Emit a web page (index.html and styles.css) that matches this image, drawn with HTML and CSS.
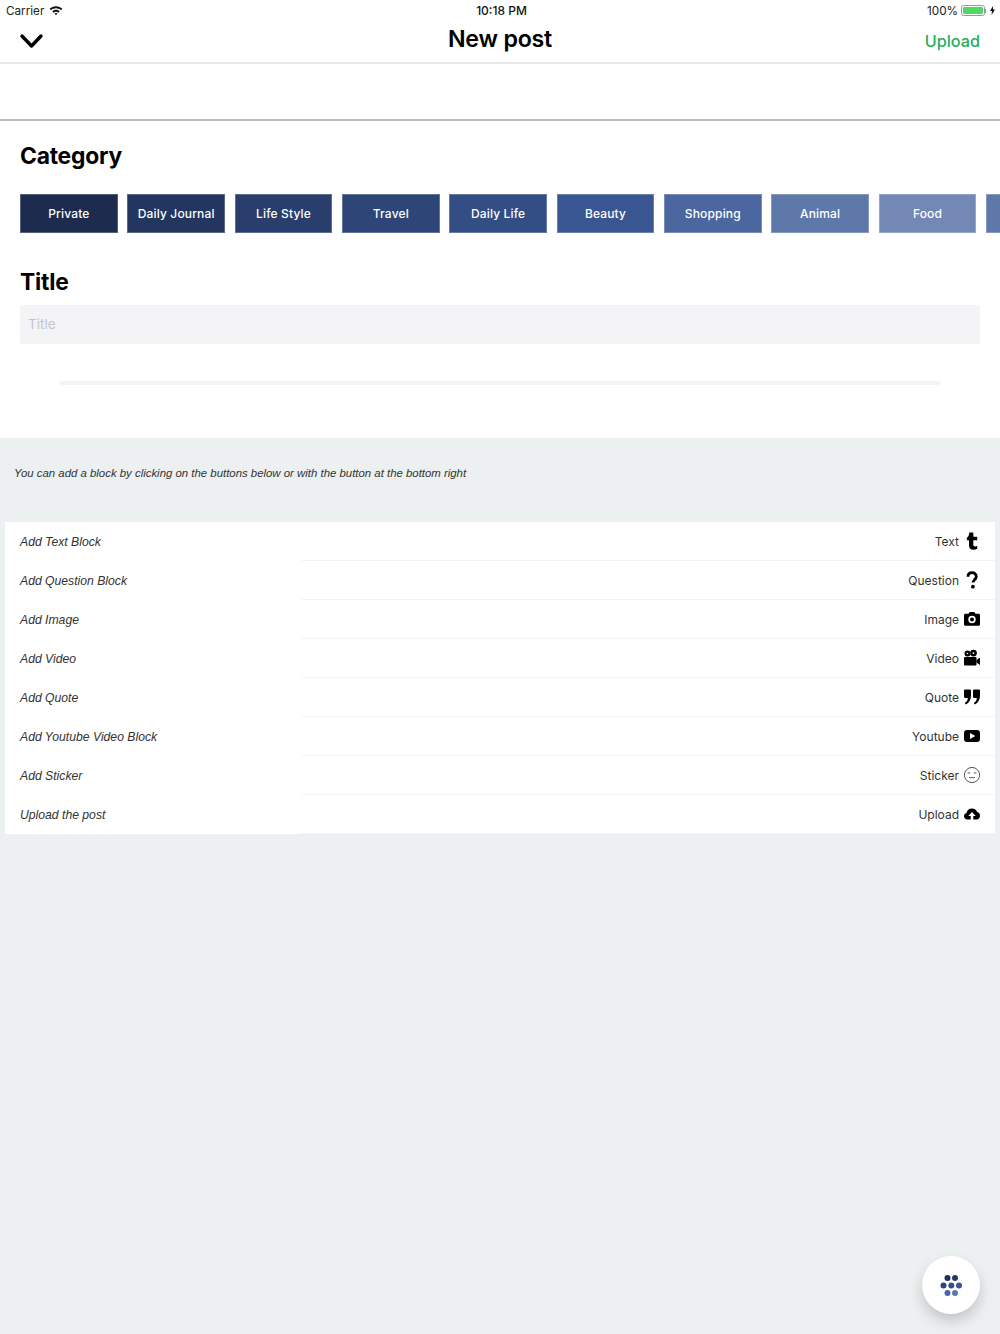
FILE: index.html
```html
<!DOCTYPE html>
<html lang="en">
<head>
<meta charset="utf-8">
<title>New post</title>
<link rel="stylesheet" href="styles.css">
</head>
<body>
<div class="page">
  <div class="status">
    <div class="status-left">
      <span>Carrier</span>
      <svg class="wifi" width="14" height="10" viewBox="0 0 15 11"><path d="M7.5 0.4C4.8 0.4 2.4 1.4 0.5 3.1L2 4.7C3.5 3.4 5.4 2.6 7.5 2.6S11.500 3.400 13 4.700L14.500 3.100C12.600 1.400 10.200 0.400 7.500 0.400ZM7.500 4.100C6 4.100 4.500 4.700 3.400 5.700L4.900 7.300C5.600 6.700 6.500 6.300 7.500 6.300S9.400 6.700 10.100 7.300L11.600 5.700C10.500 4.700 9 4.100 7.500 4.100ZM7.500 7.700C6.900 7.700 6.300 7.900 5.900 8.300L7.500 10.200L9.100 8.300C8.700 7.900 8.100 7.700 7.500 7.700Z" fill="#111"/></svg>
    </div>
    <div class="status-time">10:18 PM</div>
    <div class="status-right">
      <span>100%</span>
      <span class="battery"><span class="battery-fill"></span></span>
      <span class="battery-tip"></span>
      <svg width="5" height="9" viewBox="0 0 5 9"><path d="M3 0L0 5H2L1.500 9L5 3.500H3Z" fill="#111"/></svg>
    </div>
  </div>
  <header class="nav">
    <svg class="chevron" width="26" height="16" viewBox="0 0 26 16"><path d="M3 3L12.500 13L22 3" fill="none" stroke="#000" stroke-width="3.400" stroke-linecap="round" stroke-linejoin="round"/></svg>
    <h1 class="nav-title">New post</h1>
    <span class="nav-action">Upload</span>
  </header>
  <div class="blank"></div>
  <section class="form">
    <h2 class="heading heading-category">Category</h2>
    <div class="chips">
      <span class="chip c1">Private</span>
      <span class="chip c2">Daily Journal</span>
      <span class="chip c3">Life Style</span>
      <span class="chip c4">Travel</span>
      <span class="chip c5">Daily Life</span>
      <span class="chip c6">Beauty</span>
      <span class="chip c7">Shopping</span>
      <span class="chip c8">Animal</span>
      <span class="chip c9">Food</span>
      <span class="chip c10"></span>
    </div>
    <h2 class="heading heading-title">Title</h2>
    <div class="input">Title</div>
    <div class="rule"></div>
  </section>
  <section class="tray">
    <p class="hint">You can add a block by clicking on the buttons below or with the button at the bottom right</p>
    <div class="list">
      <div class="row">
        <span class="row-label">Add Text Block</span>
        <span class="row-action">Text
          <svg class="icon" width="18" height="18" viewBox="0 0 18 18"><path d="M6.300 0.500H10.300V4.800H14.200V8.200H10.300V12.500C10.300 13.900 11 14.400 12.100 14.400C12.900 14.400 13.500 14.200 14.200 13.800V16.800C13.200 17.500 12 17.800 10.600 17.800C7.700 17.800 6 16.300 6 13.500V8.200H3.800V5.600C5.300 5 6.100 3.200 6.300 0.500Z" fill="#000"/></svg>
        </span>
      </div>
      <div class="row">
        <span class="row-label">Add Question Block</span>
        <span class="row-action">Question
          <svg class="icon" width="18" height="18" viewBox="0 0 18 18"><path d="M5 5.800C5 3 6.800 1.700 9 1.700C11.400 1.700 13.300 3.300 13.300 5.600C13.300 8.500 10 8.800 10 11.500" fill="none" stroke="#000" stroke-width="2.800"/><circle cx="9.900" cy="15.700" r="1.900" fill="#000"/></svg>
        </span>
      </div>
      <div class="row">
        <span class="row-label">Add Image</span>
        <span class="row-action">Image
          <svg class="icon" width="18" height="18" viewBox="0 0 18 18"><path fill-rule="evenodd" d="M2.500 3.800H5.500L6.700 2H11.300L12.500 3.800H15.500C16.400 3.800 17 4.400 17 5.300V14.200C17 15.100 16.400 15.700 15.500 15.700H2.500C1.600 15.700 1 15.100 1 14.200V5.300C1 4.400 1.600 3.800 2.500 3.800ZM9 5.800A3.700 3.700 0 1 0 9 13.200A3.700 3.700 0 1 0 9 5.800ZM9 7.500A2 2 0 1 1 9 11.500A2 2 0 1 1 9 7.500Z" fill="#000"/></svg>
        </span>
      </div>
      <div class="row">
        <span class="row-label">Add Video</span>
        <span class="row-action">Video
          <svg class="icon" width="18" height="18" viewBox="0 0 18 18"><path fill-rule="evenodd" d="M4.500 1.500A3 3 0 1 0 4.500 7.500A3 3 0 1 0 4.500 1.500ZM4.500 3.700A0.800 0.800 0 1 1 4.500 5.300A0.800 0.800 0 1 1 4.500 3.700ZM10.500 0.700A3.400 3.400 0 1 0 10.500 7.500A3.400 3.400 0 1 0 10.500 0.700ZM10.500 3.200A0.900 0.900 0 1 1 10.500 5A0.900 0.900 0 1 1 10.500 3.200Z" fill="#000"/><rect x="1" y="8" width="12.500" height="8.500" rx="1" fill="#000"/><path d="M13.500 11L17 8.800V16L13.500 13.500Z" fill="#000"/></svg>
        </span>
      </div>
      <div class="row">
        <span class="row-label">Add Quote</span>
        <span class="row-action">Quote
          <svg class="icon" width="18" height="18" viewBox="0 0 18 18"><path d="M2.200 1.500H6.800C7.500 1.500 8 2 8 2.700V7.500C8 11.500 6.400 14.800 2.700 16.500L1.800 14.900C3.700 13.900 4.700 12.400 4.800 10H2.200C1.500 10 1 9.500 1 8.800V2.700C1 2 1.500 1.500 2.200 1.500ZM11.200 1.500H15.800C16.500 1.500 17 2 17 2.700V7.500C17 11.500 15.400 14.800 11.700 16.500L10.800 14.900C12.700 13.900 13.700 12.400 13.800 10H11.200C10.500 10 10 9.500 10 8.800V2.700C10 2 10.500 1.500 11.200 1.500Z" fill="#000"/></svg>
        </span>
      </div>
      <div class="row">
        <span class="row-label">Add Youtube Video Block</span>
        <span class="row-action">Youtube
          <svg class="icon" width="18" height="18" viewBox="0 0 18 18"><path fill-rule="evenodd" d="M4 3H14C16 3 17 4 17 6V12C17 14 16 15 14 15H4C2 15 1 14 1 12V6C1 4 2 3 4 3ZM7 6V12L12.300 9Z" fill="#000"/></svg>
        </span>
      </div>
      <div class="row">
        <span class="row-label">Add Sticker</span>
        <span class="row-action">Sticker
          <svg class="icon" width="18" height="18" viewBox="0 0 18 18" fill="none" stroke="#444" stroke-width="0.900"><circle cx="9" cy="9" r="7.600"/><path d="M4.800 7.300Q6 6.100 7.200 7.300M10.800 7.300Q12 6.100 13.200 7.300M6 11.300Q7.500 12.300 9 11.300Q10.500 12.300 12 11.300"/></svg>
        </span>
      </div>
      <div class="row">
        <span class="row-label">Upload the post</span>
        <span class="row-action">Upload
          <svg class="icon" width="18" height="18" viewBox="0 0 18 18"><path fill-rule="evenodd" d="M4.500 14.500C2.500 14.500 1 13 1 11.200C1 9.600 2 8.300 3.500 8C3.800 5.500 6 3.500 9 3.500C11.500 3.500 13.500 5 14.200 7.100C15.900 7.400 17 8.900 17 10.700C17 12.800 15.500 14.500 13.500 14.500H10.300V11H12.700L9 7L5.300 11H7.700V14.500Z" fill="#000"/></svg>
        </span>
      </div>
    </div>
  </section>
  <button class="fab" type="button" aria-label="Add block">
    <svg width="24" height="24" viewBox="0 0 24 24">
      <circle cx="8.500" cy="5" r="3" fill="#1f2f55"/><circle cx="16" cy="5" r="3" fill="#24386a"/>
      <circle cx="4.500" cy="12.500" r="3" fill="#2d4477"/><circle cx="12.300" cy="12.500" r="3" fill="#34508a"/><circle cx="20" cy="12.500" r="3" fill="#3a5699"/>
      <circle cx="8.500" cy="20" r="3" fill="#4a66a0"/><circle cx="16" cy="20" r="3" fill="#5f79ab"/>
    </svg>
  </button>
</div>
</body>
</html>
```
FILE: styles.css
```css
* { box-sizing: border-box; }
html, body { margin: 0; padding: 0; }
body { font-family: Inter, "Liberation Sans", sans-serif; background: #fff; color: #000; }
.page { position: relative; width: 1000px; height: 1334px; overflow: hidden; display: flex; flex-direction: column; }

.status { height: 20px; display: flex; align-items: center; justify-content: space-between; padding: 1px 5px 0 6px; font-size: 11.700px; color: #222; flex: none; position: relative; }
.status-left { display: flex; align-items: center; gap: 5px; width: 200px; }
.status-time { font-size: 12px; font-weight: 500; color: #111; padding-left: 2px; }
.status-right { display: flex; align-items: center; width: 200px; justify-content: flex-end; }
.battery { width: 24px; height: 11px; border: 1px solid #999; border-radius: 2.500px; padding: 1px; margin-left: 3px; display: flex; }
.battery-fill { flex: 1; background: #4cd964; border-radius: 1px; }
.battery-tip { width: 1px; height: 4px; background: #999; margin-right: 4px; }

.nav { height: 44px; flex: none; display: flex; align-items: center; justify-content: space-between; padding: 0 20px 0 19px; border-bottom: 2px solid #e8e8e8; position: relative; }
.chevron { display: block; }
.nav-title { position: absolute; left: 0; right: 0; top: 4px; margin: 0; text-align: center; font-size: 23.200px; line-height: 30px; font-weight: 600; letter-spacing: -0.200px; }
.nav-action { font-size: 16.200px; font-weight: 500; color: #27ae60; }

.blank { height: 57px; flex: none; border-bottom: 2px solid #bdbdbd; }

.form { height: 317px; flex: none; padding: 0 0 0 20px; overflow: hidden; }
.heading { margin: 0; font-size: 22.800px; line-height: 30px; font-weight: 700; letter-spacing: -0.200px; }
.heading-category { margin-top: 20px; }
.chips { display: flex; gap: 9.650px; margin-top: 23px; width: 1100px; }
.chip { flex: none; width: 97.700px; height: 39px; display: flex; align-items: center; justify-content: center; color: #fff; font-size: 12px; font-weight: 500; letter-spacing: 0.150px; border: 1px solid rgba(255,255,255,0.25); }
.c1 { background: #1c2b4e; }
.c2 { background: #223660; }
.c3 { background: #293e6c; }
.c4 { background: #2e4577; }
.c5 { background: #334d85; }
.c6 { background: #3a5692; }
.c7 { background: #4c67a0; }
.c8 { background: #5e78a9; }
.c9 { background: #7488b5; }
.c10 { background: #5e78a9; }
.heading-title { margin-top: 34px; }
.input { width: 960px; height: 39px; margin-top: 8px; background: #f4f4f6; border-radius: 3px; padding: 0 8px 2px; display: flex; align-items: center; font-size: 13.500px; color: #c4c4c9; }
.rule { width: 882px; height: 4px; margin: 37px 0 0 39px; background: #f4f4f5; border-radius: 2px; }

.tray { flex: 1; background: #ecf0f1; padding: 0 5px; }
.hint { margin: 0; padding: 27px 0 0 9px; font-family: "Liberation Sans", Arial, sans-serif; font-size: 11.400px; line-height: 16px; font-style: italic; color: #333; }
.list { margin-top: 41px; background: #fff; }
.row { height: 39px; display: flex; font-size: 12px; color: #333; }
.row-label { flex: none; width: 297px; padding-left: 15px; display: flex; align-items: center; font-family: "Liberation Sans", Arial, sans-serif; font-size: 12.200px; font-style: italic; }
.row-action { flex: 1; display: flex; align-items: center; justify-content: flex-end; gap: 4px; padding-right: 14px; border-bottom: 1.500px solid #f1f2f3; }
.icon { display: block; flex: none; }

.fab { position: absolute; left: 922px; top: 1256px; width: 58px; height: 58px; padding: 0; border: 0; border-radius: 50%; background: #fff; box-shadow: 0 7px 14px rgba(0,0,0,0.18); display: flex; align-items: center; justify-content: center; }
```
